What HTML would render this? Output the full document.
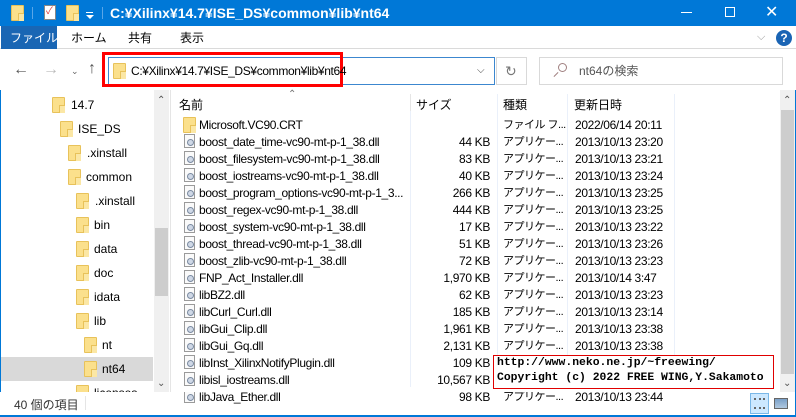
<!DOCTYPE html><html><head><meta charset="utf-8"><style>
*{margin:0;padding:0;box-sizing:border-box}
body{width:796px;height:417px;overflow:hidden;background:#fff;font-family:"Liberation Sans","Noto Sans CJK JP",sans-serif;font-size:12px;line-height:14px;color:#000;position:relative}
.a{position:absolute}
.fold{position:absolute;width:13px;height:16px;background:#fbe08c;border:1px solid #e8c25a;border-radius:1px}
.fold:after{content:"";position:absolute;right:-1px;bottom:-1px;width:5px;height:7px;border-left:1px solid #e8c25a;border-top:1px solid #e8c25a;background:#fbe7a5}
.dll{position:absolute;width:11px;height:14px;border:1px solid #9a9a9a;background:#fafafa}
.dll:after{content:"";position:absolute;left:2px;top:4px;width:5px;height:5px;border-radius:50%;border:1px solid #7a8aa0;background:#cfd8e6}
.t{position:absolute;white-space:nowrap;font-size:12px;line-height:14px}
.n{letter-spacing:-0.35px}
.k{font-size:11px;letter-spacing:-0.5px}
.r{position:absolute;text-align:right;white-space:nowrap;line-height:14px}
</style></head><body>
<div class="a" style="left:0;top:0;width:796px;height:26px;background:#0078d7"></div>
<div class="fold" style="left:11px;top:5px"></div>
<div class="a" style="left:32px;top:7px;width:1px;height:12px;background:#5aa6e8"></div>
<div class="a" style="left:44px;top:5px;width:12px;height:15px;background:#fff;border:1px solid #888"></div>
<div class="a" style="left:46px;top:5px;color:#e04040;font-size:10px">✓</div>
<div class="fold" style="left:66px;top:5px"></div>
<div class="a" style="left:86px;top:12px;width:7px;height:1px;background:#fff"></div>
<div class="a" style="left:86px;top:15px;width:0;height:0;border-left:4px solid transparent;border-right:4px solid transparent;border-top:4px solid #fff"></div>
<div class="a" style="left:102px;top:7px;width:1px;height:12px;background:#5aa6e8"></div>
<div class="t" style="left:110px;top:5px;color:#fff;font-size:14px;line-height:16px;font-weight:bold">C:¥Xilinx¥14.7¥ISE_DS¥common¥lib¥nt64</div>
<div class="a" style="left:681px;top:12px;width:11px;height:1px;background:#fff"></div>
<div class="a" style="left:725px;top:7px;width:10px;height:10px;border:1px solid #fff"></div>
<div class="t" style="left:765px;top:4px;color:#fff;font-size:16px;line-height:18px">✕</div>
<div class="a" style="left:0;top:26px;width:796px;height:23px;background:#fff;border-bottom:1px solid #dadada"></div>
<div class="a" style="left:1px;top:26px;width:56px;height:23px;background:#1966b4"></div>
<div class="t" style="left:10px;top:31px;color:#fff">ファイル</div>
<div class="t" style="left:71px;top:31px">ホーム</div>
<div class="t" style="left:128px;top:31px">共有</div>
<div class="t" style="left:180px;top:31px">表示</div>
<div class="t" style="left:757px;top:30px;color:#999;font-size:11px">⌵</div>
<div class="a" style="left:776px;top:30px;width:16px;height:16px;border-radius:50%;background:#1a64b4;color:#fff;font-weight:bold;font-size:12px;text-align:center;line-height:16px">?</div>
<div class="t" style="left:13px;top:62px;color:#555;font-size:16px;line-height:16px">←</div>
<div class="t" style="left:43px;top:62px;color:#bbb;font-size:16px;line-height:16px">→</div>
<div class="t" style="left:71px;top:64px;color:#666;font-size:9px">⌄</div>
<div class="t" style="left:88px;top:61px;color:#555;font-size:16px;line-height:16px">↑</div>
<div class="a" style="left:108px;top:57px;width:387px;height:28px;border:1px solid #3c87cf"></div>
<div class="a" style="left:102px;top:52px;width:241px;height:35px;border:3px solid #ff0000"></div>
<div class="fold" style="left:113px;top:63px"></div>
<div class="t n" style="left:131px;top:64px">C:¥Xilinx¥14.7¥ISE_DS¥common¥lib¥nt64</div>
<div class="t" style="left:477px;top:64px;color:#444;font-size:10px">⌵</div>
<div class="a" style="left:496px;top:57px;width:31px;height:28px;border:1px solid #d9d9d9"></div>
<div class="t" style="left:505px;top:63px;color:#777;font-size:14px;line-height:16px">↻</div>
<div class="a" style="left:539px;top:57px;width:244px;height:28px;border:1px solid #d9d9d9"></div>
<div class="a" style="left:558px;top:63px;width:9px;height:9px;border:1px solid #a08080;border-radius:50%"></div>
<div class="a" style="left:553px;top:74px;width:6px;height:1px;background:#a08080;transform:rotate(-45deg)"></div>
<div class="t" style="left:579px;top:64px;color:#555">nt64の検索</div>
<div class="a" style="left:0;top:90px;width:1px;height:302px;background:#0078d7"></div>
<div class="a" style="left:795px;top:90px;width:1px;height:327px;background:#0078d7"></div>
<div class="a" style="left:1px;top:357px;width:152px;height:24px;background:#d9d9d9"></div>
<div class="fold" style="left:52px;top:97px"></div><div class="t" style="left:71px;top:98px">14.7</div>
<div class="fold" style="left:60px;top:121px"></div><div class="t" style="left:78px;top:122px">ISE_DS</div>
<div class="fold" style="left:68px;top:145px"></div><div class="t" style="left:87px;top:146px">.xinstall</div>
<div class="fold" style="left:68px;top:169px"></div><div class="t" style="left:86px;top:170px">common</div>
<div class="fold" style="left:76px;top:193px"></div><div class="t" style="left:95px;top:194px">.xinstall</div>
<div class="fold" style="left:76px;top:217px"></div><div class="t" style="left:94px;top:218px">bin</div>
<div class="fold" style="left:76px;top:241px"></div><div class="t" style="left:94px;top:242px">data</div>
<div class="fold" style="left:76px;top:265px"></div><div class="t" style="left:94px;top:266px">doc</div>
<div class="fold" style="left:76px;top:289px"></div><div class="t" style="left:94px;top:290px">idata</div>
<div class="fold" style="left:76px;top:313px"></div><div class="t" style="left:94px;top:314px">lib</div>
<div class="fold" style="left:84px;top:337px"></div><div class="t" style="left:102px;top:338px">nt</div>
<div class="fold" style="left:84px;top:361px"></div><div class="t" style="left:102px;top:362px">nt64</div>
<div class="a" style="left:76px;top:385px;width:14px;height:7px;overflow:hidden"><div class="fold" style="left:0;top:0"></div></div><div class="a" style="left:94px;top:386px;height:6px;overflow:hidden;width:50px"><div class="t" style="left:0;top:0">licenses</div></div>
<div class="a" style="left:154px;top:90px;width:15px;height:302px;background:#f0f0f0"></div>
<div class="a" style="left:155px;top:228px;width:13px;height:68px;background:#cdcdcd"></div>
<div class="t" style="left:157px;top:94px;color:#555;font-size:10px">⌃</div>
<div class="t" style="left:157px;top:377px;color:#555;font-size:10px">⌄</div>
<div class="a" style="left:170px;top:90px;width:1px;height:302px;background:#e5e5e5"></div>
<div class="t" style="left:288px;top:88px;color:#777;font-size:10px">⌃</div>
<div class="t" style="left:179px;top:98px">名前</div>
<div class="a" style="left:410px;top:94px;width:1px;height:298px;background:#eaf0fa"></div>
<div class="a" style="left:410px;top:94px;width:1px;height:17px;background:#e5e5e5"></div>
<div class="t" style="left:416px;top:98px">サイズ</div>
<div class="a" style="left:497px;top:94px;width:1px;height:298px;background:#eaf0fa"></div>
<div class="t" style="left:503px;top:98px">種類</div>
<div class="a" style="left:567px;top:94px;width:1px;height:298px;background:#eaf0fa"></div>
<div class="t" style="left:574px;top:98px">更新日時</div>
<div class="a" style="left:674px;top:94px;width:1px;height:298px;background:#eaf0fa"></div>
<div class="a" style="left:780px;top:90px;width:15px;height:302px;background:#f0f0f0"></div>
<div class="a" style="left:781px;top:110px;width:13px;height:264px;background:#cdcdcd"></div>
<div class="t" style="left:783px;top:94px;color:#555;font-size:10px">⌃</div>
<div class="t" style="left:783px;top:377px;color:#555;font-size:10px">⌄</div>
<div id="rows"></div>
<div class="a" style="left:171px;top:387px;width:609px;height:5px;background:#fff"></div>
<div class="a" style="left:493px;top:355px;width:281px;height:34px;background:#fff;border:1px solid #e00000"></div>
<div class="t" style="left:497px;top:356px;font-family:'Liberation Mono',monospace;font-weight:bold;font-size:11.4px;line-height:15px">http://www.neko.ne.jp/~freewing/<br>Copyright (c) 2022 FREE WING,Y.Sakamoto</div>
<div class="t" style="left:14px;top:398px;color:#333">40 個の項目</div>
<div class="a" style="left:85px;top:396px;width:1px;height:14px;background:#e5e5e5"></div>
<div class="a" style="left:750px;top:393px;width:19px;height:21px;background:#cce8ff;border:1px solid #7ab8e8"></div>
<div class="a" style="left:754px;top:398px;width:11px;height:11px;border-top:2px dotted #666;border-bottom:2px dotted #666"></div>
<div class="a" style="left:774px;top:398px;width:14px;height:11px;border:1px solid #666;background:linear-gradient(#7aa0c8,#b0c8e0)"></div>
<div class="a" style="left:0;top:415px;width:796px;height:2px;background:#0078d7"></div>
<script>
var d=[["Microsoft.VC90.CRT","","ファイル フ...","2022/06/14 20:11",1],
["boost_date_time-vc90-mt-p-1_38.dll","44 KB","アプリケー...","2013/10/13 23:20"],
["boost_filesystem-vc90-mt-p-1_38.dll","83 KB","アプリケー...","2013/10/13 23:21"],
["boost_iostreams-vc90-mt-p-1_38.dll","40 KB","アプリケー...","2013/10/13 23:24"],
["boost_program_options-vc90-mt-p-1_3...","266 KB","アプリケー...","2013/10/13 23:25"],
["boost_regex-vc90-mt-p-1_38.dll","444 KB","アプリケー...","2013/10/13 23:25"],
["boost_system-vc90-mt-p-1_38.dll","17 KB","アプリケー...","2013/10/13 23:22"],
["boost_thread-vc90-mt-p-1_38.dll","51 KB","アプリケー...","2013/10/13 23:26"],
["boost_zlib-vc90-mt-p-1_38.dll","72 KB","アプリケー...","2013/10/13 23:23"],
["FNP_Act_Installer.dll","1,970 KB","アプリケー...","2013/10/14 3:47"],
["libBZ2.dll","62 KB","アプリケー...","2013/10/13 23:23"],
["libCurl_Curl.dll","185 KB","アプリケー...","2013/10/13 23:14"],
["libGui_Clip.dll","1,961 KB","アプリケー...","2013/10/13 23:38"],
["libGui_Gq.dll","2,131 KB","アプリケー...","2013/10/13 23:38"],
["libInst_XilinxNotifyPlugin.dll","109 KB","アプリケー...","2013/10/13 23:23"],
["libisl_iostreams.dll","10,567 KB","アプリケー...","2013/10/13 23:23"],
["libJava_Ether.dll","98 KB","アプリケー...","2013/10/13 23:44"]];
var h="";d.forEach(function(r,i){var y=116+i*17;
h+=(r[4]?'<div class="fold" style="left:183px;top:'+(y+1)+'px"></div>':'<div class="dll" style="left:184px;top:'+(y+1)+'px"></div>');
h+='<div class="t n" style="left:199px;top:'+(y+2)+'px">'+r[0]+'</div><div class="r n" style="right:306px;top:'+(y+2)+'px">'+r[1]+'</div><div class="t k" style="left:503px;top:'+(y+2)+'px">'+r[2]+'</div><div class="t n" style="left:575px;top:'+(y+2)+'px">'+r[3]+'</div>';});
document.getElementById("rows").innerHTML=h;
</script>
</body></html>
